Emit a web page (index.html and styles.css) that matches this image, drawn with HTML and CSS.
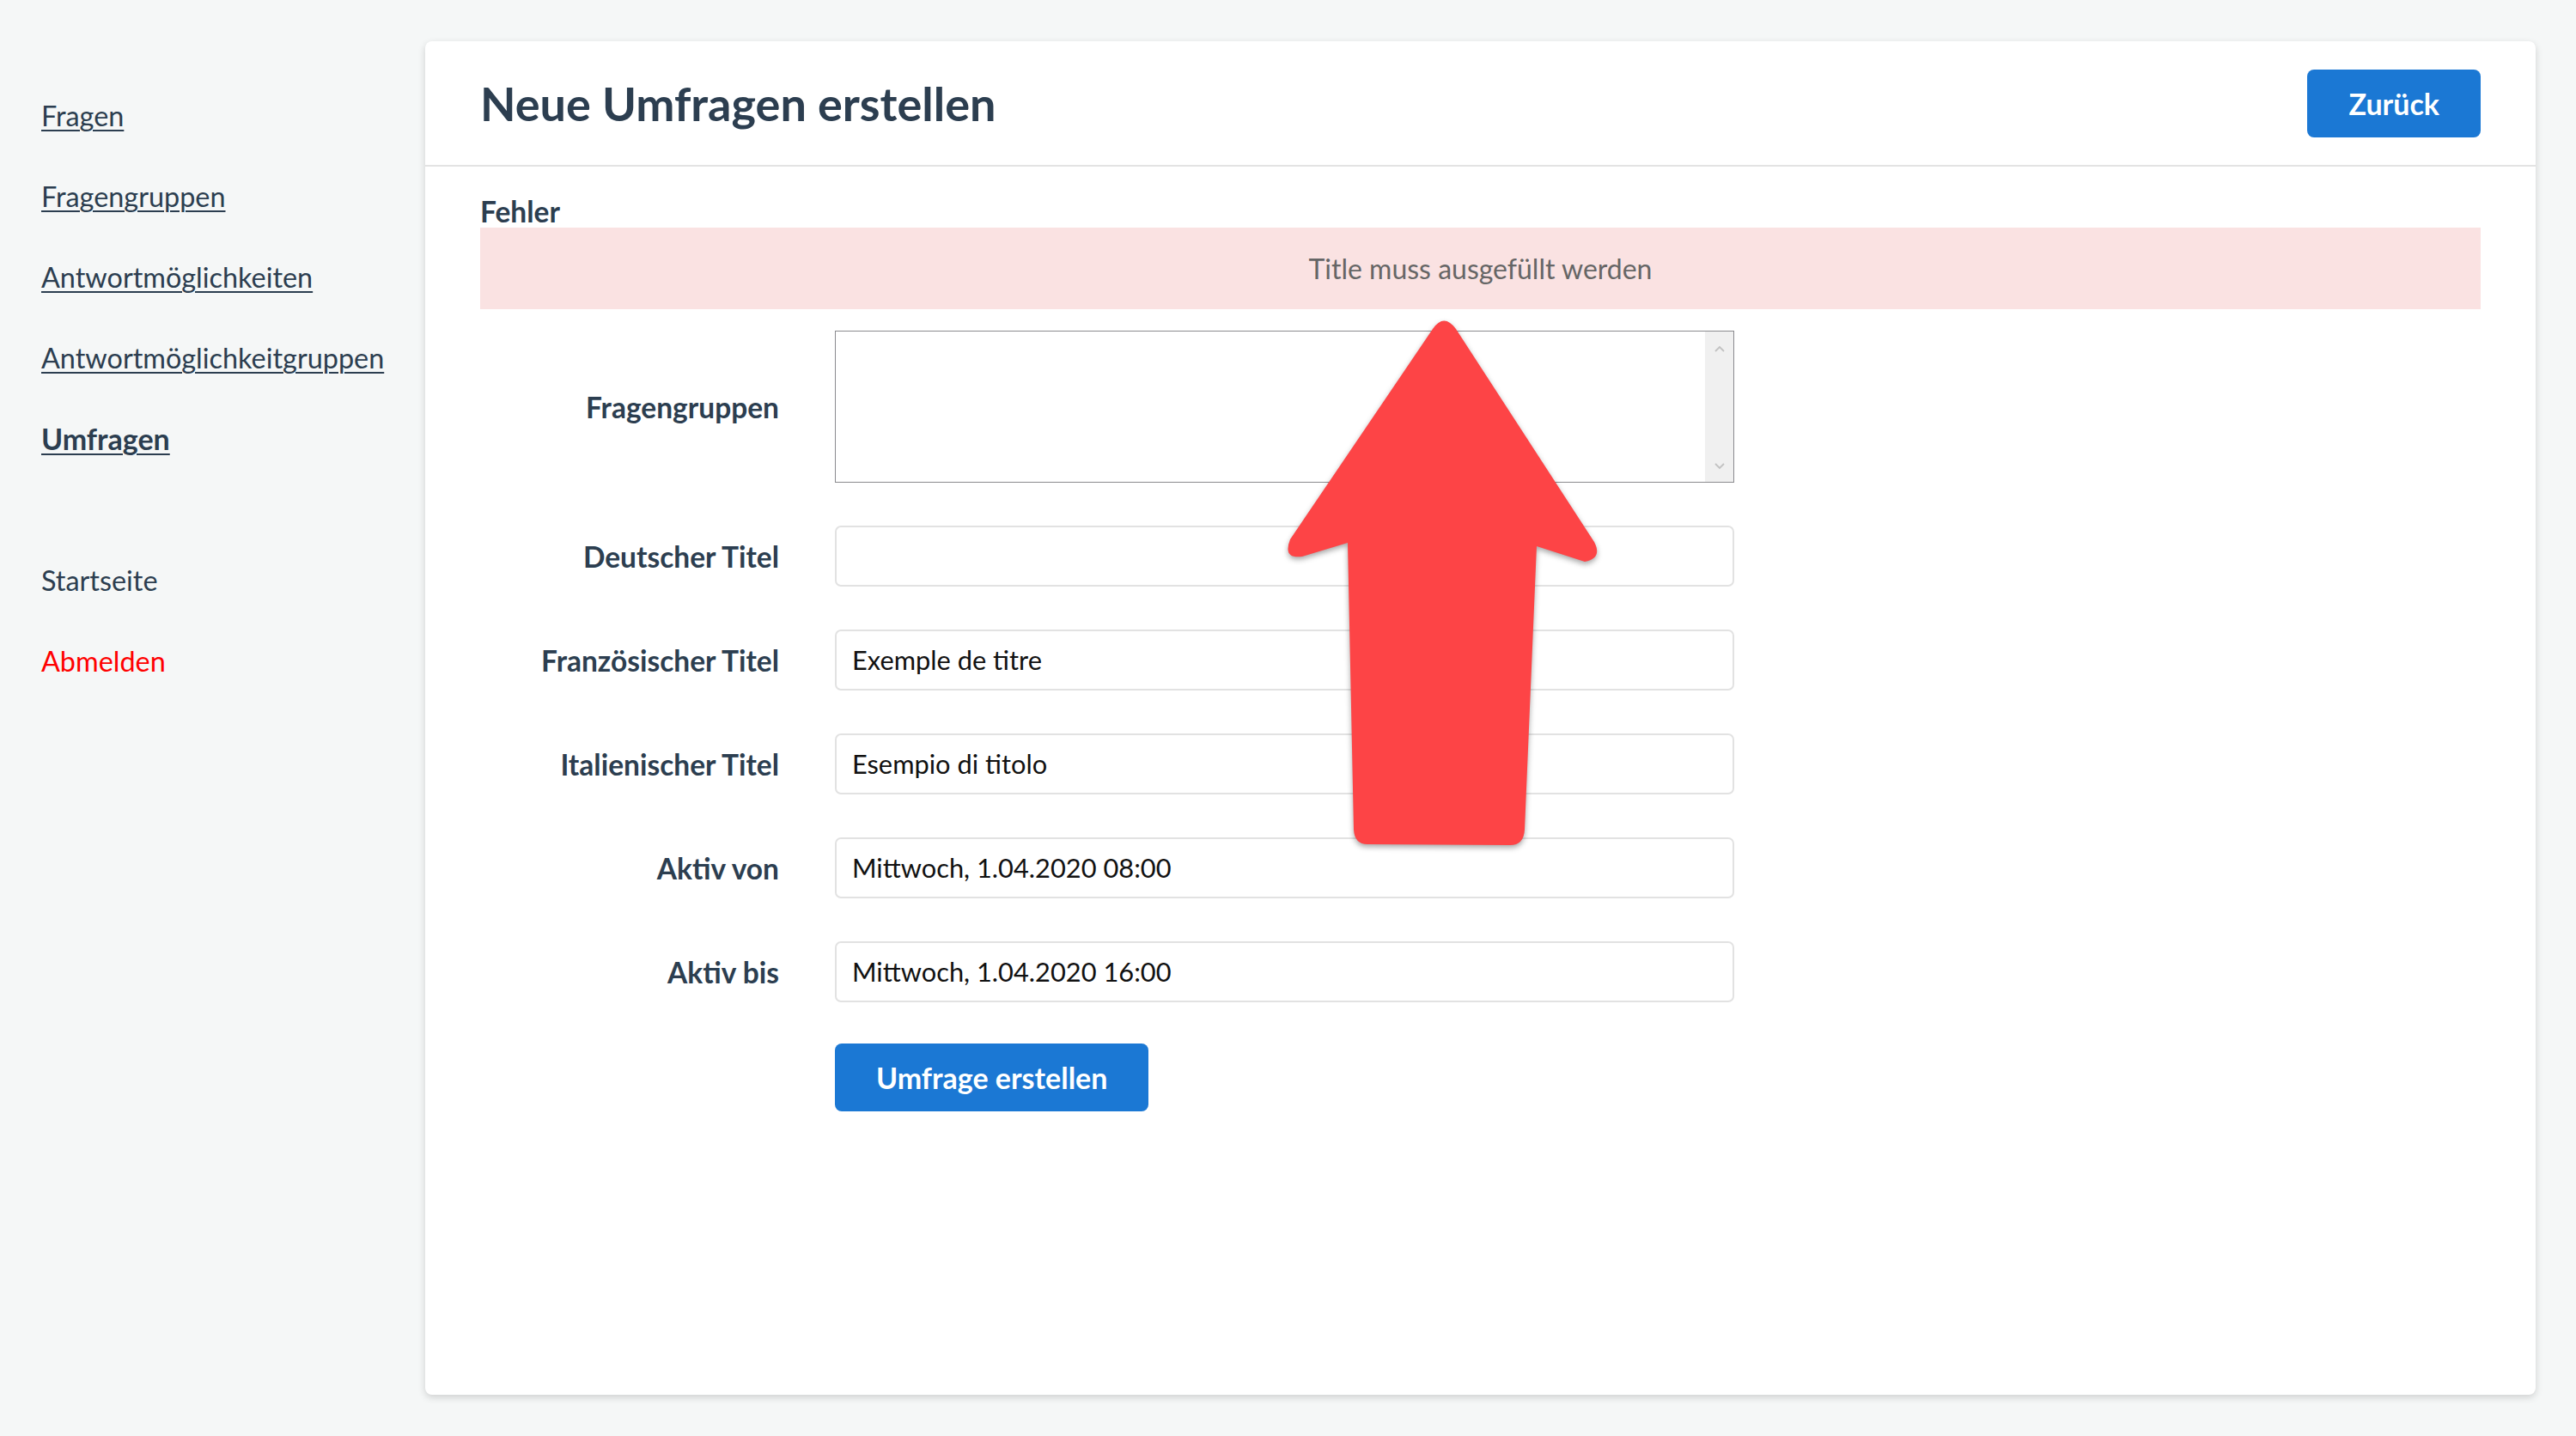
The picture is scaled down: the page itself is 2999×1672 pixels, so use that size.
FILE: index.html
```html
<!DOCTYPE html>
<html lang="de">
<head>
<meta charset="utf-8">
<title>Neue Umfragen erstellen</title>
<link rel="stylesheet" href="styles.css">
</head>
<body>
<div class="app">
  <nav class="sidebar">
    <a class="nav-link" href="#">Fragen</a>
    <a class="nav-link" href="#">Fragengruppen</a>
    <a class="nav-link" href="#">Antwortmöglichkeiten</a>
    <a class="nav-link" href="#">Antwortmöglichkeitgruppen</a>
    <a class="nav-link nav-link-active" href="#">Umfragen</a>
    <a class="nav-link nav-link-plain nav-link-gap" href="#">Startseite</a>
    <a class="nav-link nav-link-plain nav-link-danger" href="#">Abmelden</a>
  </nav>
  <main class="main">
    <section class="card">
      <header class="card-header">
        <h1 class="card-title">Neue Umfragen erstellen</h1>
        <button class="btn" type="button">Zurück</button>
      </header>
      <div class="card-body">
        <h5 class="errors-title">Fehler</h5>
        <div class="alert">Title muss ausgefüllt werden</div>
        <form class="form">
          <div class="form-row">
            <label class="form-label">Fragengruppen</label>
            <div class="listbox">
              <div class="listbox-scroll">
                <svg class="chev" viewBox="0 0 12 8" width="12" height="8"><path d="M1 7 L6 2 L11 7" /></svg>
                <svg class="chev" viewBox="0 0 12 8" width="12" height="8"><path d="M1 1 L6 6 L11 1" /></svg>
              </div>
            </div>
          </div>
          <div class="form-row">
            <label class="form-label">Deutscher Titel</label>
            <input class="input" type="text" value="">
          </div>
          <div class="form-row">
            <label class="form-label">Französischer Titel</label>
            <input class="input" type="text" value="Exemple de titre">
          </div>
          <div class="form-row">
            <label class="form-label">Italienischer Titel</label>
            <input class="input" type="text" value="Esempio di titolo">
          </div>
          <div class="form-row">
            <label class="form-label">Aktiv von</label>
            <input class="input" type="text" value="Mittwoch, 1.04.2020 08:00">
          </div>
          <div class="form-row">
            <label class="form-label">Aktiv bis</label>
            <input class="input" type="text" value="Mittwoch, 1.04.2020 16:00">
          </div>
          <div class="form-row form-row-submit">
            <span></span>
            <div><button class="btn" type="submit">Umfrage erstellen</button></div>
          </div>
        </form>
      </div>
    </section>
  </main>
</div>
<svg class="arrow" viewBox="1470 350 420 660" width="420" height="660">
  <path d="M1668 383 Q1681 364 1695 383 L1856 631 Q1866 650 1845 654 L1789 636 L1775 966 Q1774 984 1758 984 L1592 983 Q1577 983 1576 966 L1569 632 L1516 648 Q1493 651 1502 628 Z" />
</svg>
</body>
</html>
```
FILE: styles.css
```css
html, body {
  margin: 0;
  padding: 0;
}
body {
  background: #f5f7f7;
  font-family: "Lato", "Open Sans", sans-serif;
  color: #2c3e50;
}
.app {
  display: flex;
  min-height: 100vh;
  box-sizing: border-box;
}
.sidebar {
  flex: none;
  width: 495px;
  box-sizing: border-box;
  padding: 88px 0 0 48px;
  display: flex;
  flex-direction: column;
  align-items: flex-start;
}
.nav-link {
  display: block;
  font-size: 32.4px;
  line-height: 94px;
  color: #2c3e50;
  text-decoration: underline;
  text-decoration-thickness: 2px;
  text-underline-offset: 4px;
}
.nav-link-active {
  font-weight: 700;
  font-size: 34px;
}
.nav-link-plain {
  text-decoration: none;
}
.nav-link-gap {
  margin-top: 71px;
}
.nav-link-danger {
  color: #ff0000;
}
.main {
  flex: 1;
  display: flex;
  padding: 48px 47px 48px 0;
}
.card {
  flex: 1;
  background: #ffffff;
  border-radius: 8px;
  box-shadow: 0 3px 9px rgba(0, 0, 0, 0.16);
  display: flex;
  flex-direction: column;
}
.card-header {
  height: 144px;
  border-bottom: 2px solid #e3e3e3;
  display: flex;
  align-items: center;
  justify-content: space-between;
  padding: 0 64px;
}
.card-title {
  margin: 2px 0 0;
  font-size: 54px;
  font-weight: 700;
  line-height: 1.2;
  color: #2c3e50;
}
.btn {
  display: inline-flex;
  align-items: center;
  justify-content: center;
  height: 79px;
  padding: 0 48px;
  border: none;
  border-radius: 8px;
  background: #1b78d4;
  color: #ffffff;
  font-family: "Lato", "Open Sans", sans-serif;
  font-size: 34px;
  font-weight: 700;
  cursor: pointer;
}
.card-body {
  padding: 34px 64px;
}
.errors-title {
  margin: 0;
  font-size: 33.5px;
  font-weight: 700;
  line-height: 37px;
  color: #2c3e50;
}
.alert {
  height: 95px;
  background: #fae2e2;
  color: #666666;
  font-size: 32px;
  display: flex;
  align-items: center;
  justify-content: center;
  margin-bottom: 25px;
}
.form {
  display: flex;
  flex-direction: column;
  gap: 50px;
}
.form-row {
  display: grid;
  grid-template-columns: 348px 1047px;
  column-gap: 65px;
  align-items: center;
}
.form-row-submit {
  margin-top: -2px;
}
.form-label {
  text-align: right;
  font-size: 33.5px;
  font-weight: 700;
  color: #2c3e50;
}
.listbox {
  height: 177px;
  box-sizing: border-box;
  border: 1px solid #8a8a8e;
  background: #ffffff;
  display: flex;
  justify-content: flex-end;
}
.listbox-scroll {
  width: 33px;
  background: #f0f0f0;
  display: flex;
  flex-direction: column;
  align-items: center;
  justify-content: space-between;
  padding: 16px 0 14px;
}
.chev path {
  fill: none;
  stroke: #c2c2c2;
  stroke-width: 1.8;
}
.input {
  height: 71px;
  box-sizing: border-box;
  width: 100%;
  border: 2px solid #e2e2e2;
  border-radius: 7px;
  padding: 0 18px;
  font-family: "Lato", "Open Sans", sans-serif;
  font-size: 30.8px;
  color: #111111;
  background: #ffffff;
  outline: none;
}
.arrow {
  position: absolute;
  left: 1470px;
  top: 350px;
  pointer-events: none;
  overflow: visible;
}
.arrow path {
  fill: #fd4446;
  filter: drop-shadow(0 3px 3px rgba(0, 0, 0, 0.35));
}
```
